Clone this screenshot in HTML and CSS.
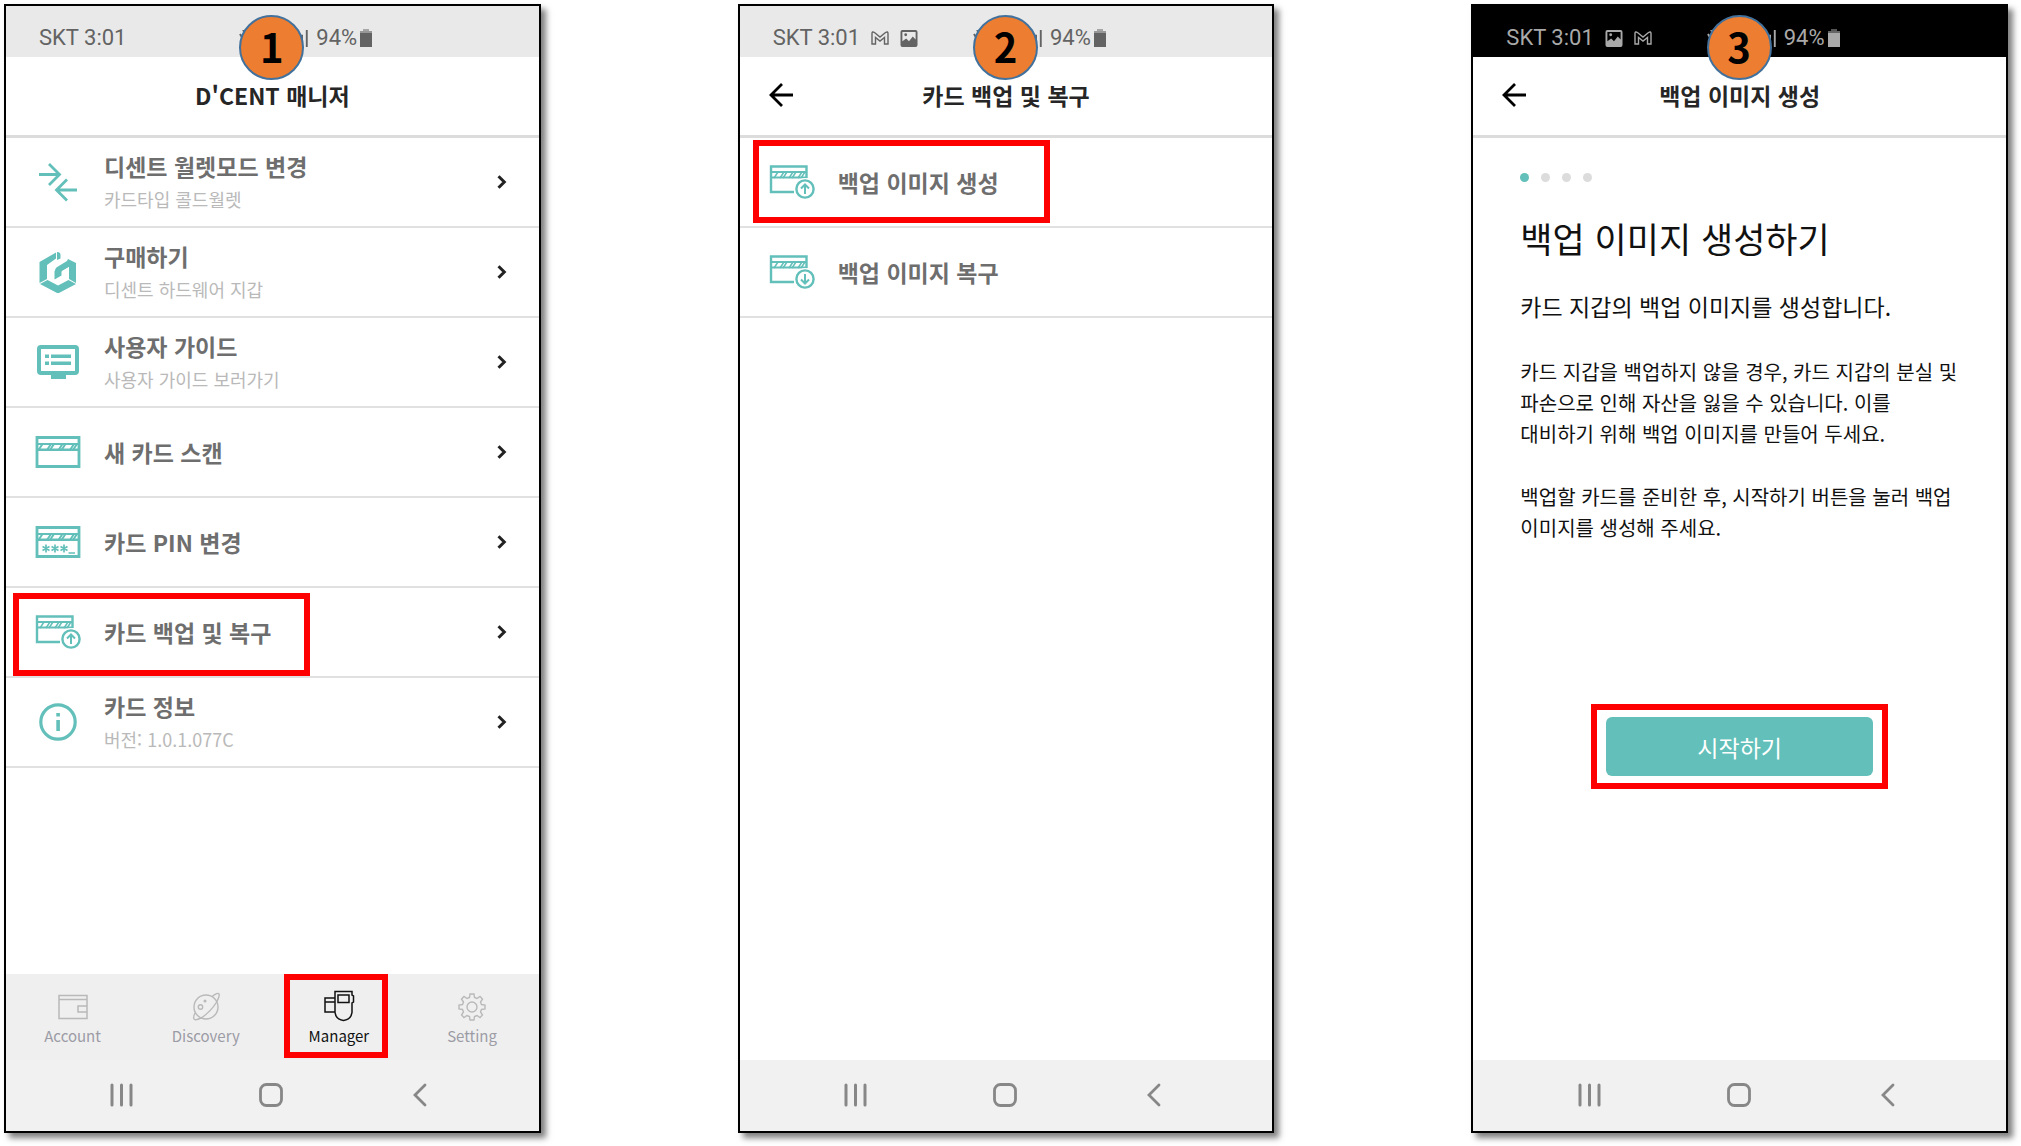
FILE: index.html
```html
<!DOCTYPE html>
<html lang="ko">
<head>
<meta charset="utf-8">
<meta name="viewport" content="width=device-width, initial-scale=1">
<title>D'CENT 카드 백업 안내</title>
<link rel="stylesheet" href="styles.css">
</head>
<body>
<svg class="defs" aria-hidden="true">
  <symbol id="i-vibrate" viewBox="0 0 16 16"><path d="M1 4l3 5M4 0l2 3M5 6l5-4 5 6-4 6z" fill="none" stroke="currentColor" stroke-width="2"/></symbol>
  <symbol id="i-signal" viewBox="0 0 12 18"><path d="M1 18v-5M5 18V5M10 18V0" fill="none" stroke="currentColor" stroke-width="2"/></symbol>
  <symbol id="i-battery" viewBox="0 0 12 18"><path d="M3 0h6v2H3z" fill="currentColor" opacity=".5"/><path d="M0 2h12v2H0z" fill="currentColor" opacity=".6"/><path d="M0 4h12v14H0z" fill="currentColor"/></symbol>
  <symbol id="i-mail" viewBox="0 0 18 14"><path d="M1 13V2.500Q1 0 3.500 1.500L9 6l5.500-4.500Q17 0 17 2.500V13h-3.500V6.500L9 10 4.500 6.500V13z" fill="none" stroke="currentColor" stroke-width="1.400"/></symbol>
  <symbol id="i-image" viewBox="0 0 18 18"><path fill-rule="evenodd" d="M2 0h14a2 2 0 0 1 2 2v14a2 2 0 0 1-2 2H2a2 2 0 0 1-2-2V2a2 2 0 0 1 2-2zM2 2v10l4-3 3 3 4-5 3 3V2z" fill="currentColor"/><circle cx="5.500" cy="5" r="1.500" fill="currentColor"/></symbol>
  <symbol id="i-back" viewBox="0 0 24 24"><path d="M24 12H2M13 1L2 12l11 11" fill="none" stroke="currentColor" stroke-width="2.800"/></symbol>
  <symbol id="i-chevron" viewBox="0 0 10 14"><path d="M1.500 1.200L7.300 7l-5.800 5.800" fill="none" stroke="currentColor" stroke-width="3"/></symbol>
  <symbol id="i-swap" viewBox="0 0 46 40"><path d="M4 12.500h20M14 2l10.500 10.500L14 23M42 28H22M32 17.500L21.500 28 32 38.500" fill="none" stroke="currentColor" stroke-width="2.800"/></symbol>
  <symbol id="i-cube" viewBox="0 0 46 42"><g fill="currentColor"><path d="M21 1.500v6L12 14v14l-7.500 4V11z"/><path d="M22 1q3.500 0 3.500 3v3.500L22 9z"/><path d="M33 8l8 4v20l-7-4V16l-7 4-7 8v-8q0-3 3-4.500L32 10z" fill-rule="evenodd"/><path d="M5 33l7.500-4L23 34.500 33.500 29l7.500 4L23 42.500z"/></g><path d="M26.500 20.500L34 16v12l-11 6-3-2v-4l6.500-3z" fill="#fff"/><path d="M19.500 20l7-4v8.500l-7 4z" fill="currentColor"/></symbol>
  <symbol id="i-guide" viewBox="0 0 46 34"><path fill-rule="evenodd" d="M6 0h34a4 4 0 0 1 4 4v22a4 4 0 0 1-4 4h-9v4H16v-4H6a4 4 0 0 1-4-4V4a4 4 0 0 1 4-4zM6 4v22h34V4z" fill="currentColor"/><path d="M10 9.500h4v3.500h-4zM16 9.500h20v3.500H16zM10 16.500h4V20h-4zM16 16.500h20V20H16z" fill="currentColor"/></symbol>
  <symbol id="i-card" viewBox="0 0 46 32"><path d="M2 1.500h42v29H2z" fill="none" stroke="currentColor" stroke-width="2.800"/><path d="M2 7h42v2H2zM2 12.500h42V15H2z" fill="currentColor"/><path d="M3.500 14l4-6M12 14l4-6M15 14l4-6M23.500 14l4-6M26.500 14l4-6M35 14l4-6M38 14l4-6" stroke="currentColor" stroke-width="2"/></symbol>
  <symbol id="i-pin" viewBox="0 0 46 32"><use href="#i-card"/><path d="M11 18.500v8M7.500 20.500l7 4M14.500 20.500l-7 4M20 18.500v8M16.500 20.500l7 4M23.500 20.500l-7 4M29 18.500v8M25.500 20.500l7 4M32.500 20.500l-7 4M33.500 27h6.500" stroke="currentColor" stroke-width="1.700" fill="none"/></symbol>
  <symbol id="i-cardsm" viewBox="0 0 46 34"><path d="M25 27H2V1.500h35.500V13" fill="none" stroke="currentColor" stroke-width="2.400"/><path d="M2 6h36v2H2zM2 11.500h36v2H2z" fill="currentColor"/><path d="M5 13l4-6M11 13l4-6M14 13l4-6M20 13l4-6M23 13l4-6M29 13l4-6M32 13l4-6" stroke="currentColor" stroke-width="1.500"/><circle cx="36" cy="24" r="11" fill="#fff"/><circle cx="36" cy="24" r="8.600" fill="none" stroke="currentColor" stroke-width="2.400"/></symbol>
  <symbol id="i-backup" viewBox="0 0 46 34"><use href="#i-cardsm"/><path d="M36 29V20M32 23.500l4-4 4 4" fill="none" stroke="currentColor" stroke-width="2"/></symbol>
  <symbol id="i-restore" viewBox="0 0 46 34"><use href="#i-cardsm"/><path d="M36 19v9M32 24.500l4 4 4-4" fill="none" stroke="currentColor" stroke-width="2"/></symbol>
  <symbol id="i-info" viewBox="0 0 46 38"><circle cx="23" cy="19" r="17.200" fill="none" stroke="currentColor" stroke-width="3.200"/><path d="M21.300 10h3.600v3.600h-3.600zM21.300 17h3.600v11h-3.600z" fill="currentColor"/></symbol>
  <symbol id="i-account" viewBox="0 0 32 32"><path d="M2 5.500h28v23H2zM2 9.500h28M30 16h-9v6h9" fill="none" stroke="currentColor" stroke-width="1.500"/></symbol>
  <symbol id="i-discovery" viewBox="0 0 32 32"><g fill="none" stroke="currentColor" stroke-width="1.400"><circle cx="16" cy="17" r="12"/><path d="M22 6.500Q28 2 29 4t-3 9Q21 21 12 27.500 5 31 4 29t1-6"/><circle cx="10.500" cy="17" r="2.200"/></g><circle cx="15" cy="11" r="1.500" fill="currentColor"/></symbol>
  <symbol id="i-manager" viewBox="0 0 32 32"><g fill="none" stroke="currentColor" stroke-width="1.500"><path d="M12 8H2v14h10M2 12h10M12 1.500h17V5l1.500 1v6L29 13v9.500q-1 7-8.500 8-7.500-1-8.500-8zM15 5h11v7.500H15z"/></g></symbol>
  <symbol id="i-setting" viewBox="0 0 32 32"><g fill="none" stroke="currentColor" stroke-width="1.400"><circle cx="16" cy="17" r="5"/><path d="M14 4h4l.5 3.500 2.500 1 3-2 2.500 2.500-2 3 1 2.500 3.500.5v4l-3.500.5-1 2.500 2 3-2.500 2.500-3-2-2.500 1-.5 3.500h-4l-.5-3.500-2.500-1-3 2-2.500-2.500 2-3-1-2.500-3.500-.5v-4l3.500-.5 1-2.500-2-3L8 6.500l3 2 2.500-1z"/></g></symbol>
  <symbol id="i-recents" viewBox="0 0 24 24"><path d="M2 2v20M11.500 2v20M21 2v20" stroke="currentColor" stroke-width="3" stroke-linecap="round"/></symbol>
  <symbol id="i-home" viewBox="0 0 24 24"><rect x="1.500" y="1.500" width="21" height="21" rx="6" fill="none" stroke="currentColor" stroke-width="2.800"/></symbol>
  <symbol id="i-prev" viewBox="0 0 24 24"><path d="M17 2L7 12l10 10" fill="none" stroke="currentColor" stroke-width="2.800" stroke-linecap="round"/></symbol>
</svg>

<main class="steps">
  <section class="phone">
    <span class="badge">1</span>
    <div class="status">
      <span>SKT 3:01</span>
      <div class="status-right"><svg class="vibrate"><use href="#i-vibrate"/></svg><svg class="signal"><use href="#i-signal"/></svg><span>94%</span><svg class="battery"><use href="#i-battery"/></svg></div>
    </div>
    <header class="header"><h1 class="title">D'CENT 매니저</h1></header>
    <ul class="list">
      <li><a class="row" href="#"><svg class="row-icon"><use href="#i-swap"/></svg><span class="row-text"><span class="row-title">디센트 월렛모드 변경</span><span class="row-sub">카드타입 콜드월렛</span></span><svg class="chevron"><use href="#i-chevron"/></svg></a></li>
      <li><a class="row" href="#"><svg class="row-icon"><use href="#i-cube"/></svg><span class="row-text"><span class="row-title">구매하기</span><span class="row-sub">디센트 하드웨어 지갑</span></span><svg class="chevron"><use href="#i-chevron"/></svg></a></li>
      <li><a class="row" href="#"><svg class="row-icon"><use href="#i-guide"/></svg><span class="row-text"><span class="row-title">사용자 가이드</span><span class="row-sub">사용자 가이드 보러가기</span></span><svg class="chevron"><use href="#i-chevron"/></svg></a></li>
      <li><a class="row" href="#"><svg class="row-icon"><use href="#i-card"/></svg><span class="row-text"><span class="row-title">새 카드 스캔</span></span><svg class="chevron"><use href="#i-chevron"/></svg></a></li>
      <li><a class="row" href="#"><svg class="row-icon"><use href="#i-pin"/></svg><span class="row-text"><span class="row-title">카드 PIN 변경</span></span><svg class="chevron"><use href="#i-chevron"/></svg></a></li>
      <li><a class="row marked marked-low" href="#"><svg class="row-icon"><use href="#i-backup"/></svg><span class="row-text"><span class="row-title">카드 백업 및 복구</span></span><svg class="chevron"><use href="#i-chevron"/></svg></a></li>
      <li><a class="row" href="#"><svg class="row-icon"><use href="#i-info"/></svg><span class="row-text"><span class="row-title">카드 정보</span><span class="row-sub">버전: 1.0.1.077C</span></span><svg class="chevron"><use href="#i-chevron"/></svg></a></li>
    </ul>
    <nav class="tabs">
      <a class="tab" href="#"><svg><use href="#i-account"/></svg>Account</a>
      <a class="tab" href="#"><svg><use href="#i-discovery"/></svg>Discovery</a>
      <a class="tab active" href="#"><svg><use href="#i-manager"/></svg>Manager</a>
      <a class="tab" href="#"><svg><use href="#i-setting"/></svg>Setting</a>
    </nav>
    <div class="system">
      <button type="button" aria-label="최근 앱"><svg><use href="#i-recents"/></svg></button>
      <button type="button" aria-label="홈"><svg><use href="#i-home"/></svg></button>
      <button type="button" aria-label="뒤로"><svg><use href="#i-prev"/></svg></button>
    </div>
  </section>

  <section class="phone">
    <span class="badge">2</span>
    <div class="status">
      <span>SKT 3:01</span><svg class="mail"><use href="#i-mail"/></svg><svg class="image"><use href="#i-image"/></svg>
      <div class="status-right"><svg class="vibrate"><use href="#i-vibrate"/></svg><svg class="signal"><use href="#i-signal"/></svg><span>94%</span><svg class="battery"><use href="#i-battery"/></svg></div>
    </div>
    <header class="header"><button class="back" type="button" aria-label="뒤로"><svg><use href="#i-back"/></svg></button><h1 class="title">카드 백업 및 복구</h1></header>
    <ul class="list">
      <li><a class="row marked marked-high" href="#"><svg class="row-icon"><use href="#i-backup"/></svg><span class="row-text"><span class="row-title">백업 이미지 생성</span></span></a></li>
      <li><a class="row" href="#"><svg class="row-icon"><use href="#i-restore"/></svg><span class="row-text"><span class="row-title">백업 이미지 복구</span></span></a></li>
    </ul>
    <div class="system">
      <button type="button" aria-label="최근 앱"><svg><use href="#i-recents"/></svg></button>
      <button type="button" aria-label="홈"><svg><use href="#i-home"/></svg></button>
      <button type="button" aria-label="뒤로"><svg><use href="#i-prev"/></svg></button>
    </div>
  </section>

  <section class="phone">
    <span class="badge">3</span>
    <div class="status dark">
      <span>SKT 3:01</span><svg class="image"><use href="#i-image"/></svg><svg class="mail"><use href="#i-mail"/></svg>
      <div class="status-right"><svg class="vibrate"><use href="#i-vibrate"/></svg><svg class="signal"><use href="#i-signal"/></svg><span>94%</span><svg class="battery"><use href="#i-battery"/></svg></div>
    </div>
    <header class="header"><button class="back" type="button" aria-label="뒤로"><svg><use href="#i-back"/></svg></button><h1 class="title">백업 이미지 생성</h1></header>
    <div class="guide-page">
      <div class="dots"><i class="dot on"></i><i class="dot"></i><i class="dot"></i><i class="dot"></i></div>
      <h2 class="guide-title">백업 이미지 생성하기</h2>
      <p class="lead">카드 지갑의 백업 이미지를 생성합니다.</p>
      <p class="copy">카드 지갑을 백업하지 않을 경우, 카드 지갑의 분실 및<br>파손으로 인해 자산을 잃을 수 있습니다. 이를<br>대비하기 위해 백업 이미지를 만들어 두세요.</p>
      <p class="copy">백업할 카드를 준비한 후, 시작하기 버튼을 눌러 백업<br>이미지를 생성해 주세요.</p>
      <div class="start-frame"><button class="start" type="button">시작하기</button></div>
    </div>
    <div class="system">
      <button type="button" aria-label="최근 앱"><svg><use href="#i-recents"/></svg></button>
      <button type="button" aria-label="홈"><svg><use href="#i-home"/></svg></button>
      <button type="button" aria-label="뒤로"><svg><use href="#i-prev"/></svg></button>
    </div>
  </section>
</main>
</body>
</html>
```
FILE: styles.css
```css
*, *::after { box-sizing: border-box; }
body { margin: 0; background: #fff; font-family: "Noto Sans CJK KR", "Noto Sans", sans-serif; color: #111; }
a { color: inherit; text-decoration: none; }
button { margin: 0; padding: 0; border: 0; background: none; color: inherit; font: inherit; cursor: pointer; }
h1, h2, p, ul { margin: 0; padding: 0; }
ul { list-style: none; }
svg { display: block; flex: none; }
.defs { position: absolute; width: 0; height: 0; }

.steps { display: grid; grid-template-columns: repeat(3, 1fr); gap: 197px; min-height: 100vh; padding: 4px 13px 13px 4px; }
.phone { position: relative; display: flex; flex-direction: column; border: 2px solid #000; background: #fff; box-shadow: 5px 5px 6px rgba(0, 0, 0, .5); }
.badge { position: absolute; z-index: 2; top: 9px; left: calc(50% - 33px); width: 65px; height: 65px; border: 2px solid #41719c; border-radius: 50%; background: #ed7d31; color: #000; font: bold 40px/58px "Noto Sans CJK KR", sans-serif; text-align: center; }

.status { display: flex; align-items: center; height: 51px; padding: 13px 0 0 33px; background: #e9e9e9; color: #636363; font: 22px/24px Roboto, sans-serif; }
.status.dark { background: #000; color: #a9a9a9; }
.status-right { position: absolute; left: calc(50% - 33px); display: flex; align-items: center; }
.vibrate { width: 16px; height: 16px; }
.signal { width: 12px; height: 17px; margin-left: 42px; }
.status-right span { margin-left: 7px; }
.battery { width: 12px; height: 18px; margin-left: 3px; }
.mail { width: 18px; height: 14px; margin-left: 11px; }
.image { width: 18px; height: 17px; margin-left: 11px; }

.header { position: relative; display: flex; align-items: center; justify-content: center; height: 81px; padding-bottom: 2px; border-bottom: 3px solid #dcdcdc; }
.title { color: #262626; font-size: 23px; line-height: 32px; font-weight: 700; }
.back { position: absolute; left: 29px; color: #000; }
.back svg { width: 24px; height: 24px; }

.list { flex: 1; }
.row { position: relative; display: flex; align-items: center; height: 90px; padding: 0 32px 0 29px; border-bottom: 2px solid #e1e1e1; }
.row-icon { width: 46px; height: 42px; color: #62bfb9; }
.row-text { flex: 1; display: flex; flex-direction: column; margin-left: 23px; }
.row-title { color: #6e6e6e; font-size: 23px; line-height: 34px; font-weight: 700; }
.row-sub { color: #b9b9b9; font-size: 18px; line-height: 32px; }
.chevron { width: 10px; height: 14px; color: #222; }
.marked::after { content: ""; position: absolute; left: 7px; width: 297px; height: 83px; border: 6px solid #f00; }
.marked-low::after { top: 5px; }
.marked-high::after { left: 13px; top: 2px; }

.tabs { display: grid; grid-template-columns: repeat(4, 1fr); height: 86px; background: #efefef; }
.tab { position: relative; display: flex; flex-direction: column; align-items: center; padding-top: 16px; color: #9c9ca6; font-size: 15px; line-height: 27px; }
.tab svg { width: 32px; height: 32px; color: #b9b9b9; }
.tab.active, .tab.active svg { color: #111; }
.tab.active::after { content: ""; position: absolute; left: 12px; top: 0; width: 104px; height: 84px; border: 6px solid #f00; }

.system { display: grid; grid-template-columns: repeat(3, 1fr); height: 71px; margin-top: auto; padding: 0 44px 2px 42px; background: #f1f1f1; color: #878787; }
.system button { display: grid; place-items: center; }
.system svg { width: 24px; height: 24px; }

.guide-page { display: flex; flex-direction: column; padding: 35px 40px 0 47px; }
.dots { display: flex; gap: 12px; }
.dot { width: 9px; height: 9px; border-radius: 50%; background: #dcdcdc; }
.dot.on { background: #62bfb9; }
.guide-title { margin-top: 30px; font-size: 35px; line-height: 52px; font-weight: 400; }
.lead { margin-top: 24px; font-size: 23px; line-height: 36px; }
.copy { margin-top: 32px; font-size: 20px; line-height: 31px; white-space: nowrap; }
.start-frame { align-self: center; width: 297px; margin: 161px 0 0 -7px; padding: 7px 9px; border: 6px solid #f00; }
.start { display: block; width: 100%; height: 59px; border-radius: 6px; background: #62bfb9; color: #fff; font-size: 23px; }
```
